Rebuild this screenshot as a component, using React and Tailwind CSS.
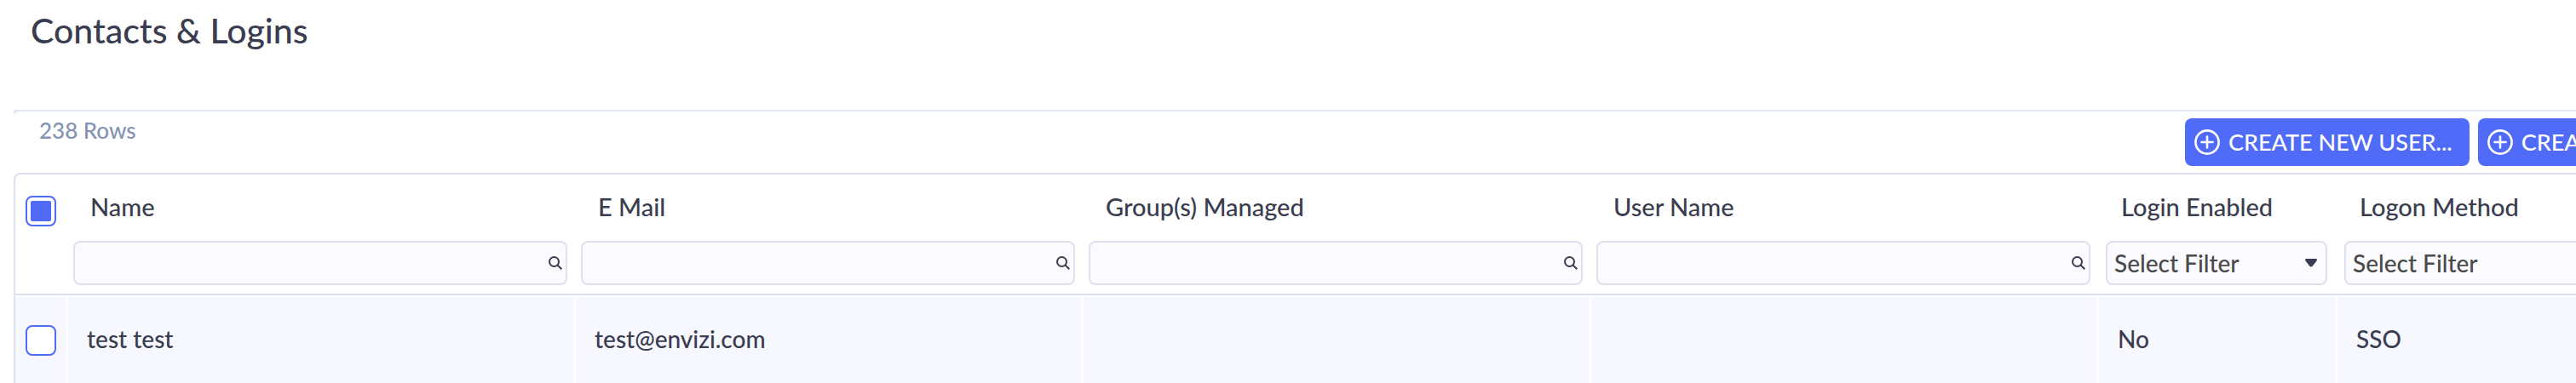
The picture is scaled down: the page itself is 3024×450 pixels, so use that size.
import { useState } from "react";

const columns = [
  { key: "name", label: "Name", filter: "text" },
  { key: "email", label: "E Mail", filter: "text" },
  { key: "groups", label: "Group(s) Managed", filter: "text" },
  { key: "userName", label: "User Name", filter: "text" },
  { key: "loginEnabled", label: "Login Enabled", filter: "select", options: ["Yes", "No"] },
  { key: "logonMethod", label: "Logon Method", filter: "select", options: ["SSO", "Password"] },
];

const rows = [
  { id: 1, name: "test test", email: "test@envizi.com", groups: "", userName: "", loginEnabled: "No", logonMethod: "SSO" },
];

const SearchIcon = () => (
  <svg viewBox="0 0 16 16" className="pointer-events-none absolute right-[6px] top-[18px] h-4 w-4" fill="none" stroke="#3a3c50" strokeWidth="2">
    <circle cx="6.5" cy="6.5" r="5.5" />
    <path d="M10.5 10.5 15.3 15.3" />
  </svg>
);

const ArrowIcon = () => (
  <svg viewBox="0 0 14 10" className="pointer-events-none absolute right-3 top-[21px] h-[10px] w-[14px]" fill="#3a3c50">
    <path d="M1.5 0h11c1.4 0 1.9 1.4 1 2.4L8.6 8.8c-.9 1-2.3 1-3.2 0L.5 2.4C-.4 1.4.1 0 1.5 0Z" />
  </svg>
);

const PlusIcon = () => (
  <svg viewBox="0 0 30 30" className="h-[30px] w-[30px] shrink-0" fill="none" stroke="white" strokeWidth="2.6">
    <circle cx="15" cy="15" r="13.6" />
    <path d="M15 8.5v13M8.5 15h13" strokeLinecap="round" />
  </svg>
);

const CheckBox = ({ label, checked, onChange }) => (
  <input
    type="checkbox"
    aria-label={label}
    checked={checked}
    onChange={onChange}
    className="block h-9 w-9 appearance-none rounded-lg border-2 border-[#506bf8] bg-white bg-clip-padding p-1 checked:bg-[#506bf8] checked:bg-clip-content"
  />
);

const ActionButton = ({ children }) => (
  <button type="button" className="flex h-14 shrink-0 items-center gap-[10px] rounded-lg bg-[#506bf8] pl-[11px] pr-5 text-[27px] font-medium whitespace-nowrap text-white">
    <PlusIcon />
    {children}
  </button>
);

const ColumnFilter = ({ column }) => {
  if (column.filter === "select") {
    return (
      <div className="relative ml-2 mr-3">
        <select
          aria-label={`${column.label} filter`}
          className="block h-[52px] w-full appearance-none rounded-lg border-2 border-[#dde1ee] bg-[#fbfbff] px-2 text-[28px] font-medium text-[#4a4a4a]"
        >
          <option>Select Filter</option>
          {column.options.map((o) => (
            <option key={o}>{o}</option>
          ))}
        </select>
        <ArrowIcon />
      </div>
    );
  }
  return (
    <div className="relative ml-[6px] mr-[10px]">
      <input
        type="text"
        aria-label={`${column.label} filter`}
        className="block h-[52px] w-full rounded-lg border-2 border-[#dde1ee] bg-[#fbfbff] pl-2 pr-8 text-[28px] font-medium"
      />
      <SearchIcon />
    </div>
  );
};

const App = () => {
  const [allSelected, setAllSelected] = useState(true);
  const [selected, setSelected] = useState([]);

  const toggleRow = (id) => {
    setSelected(selected.includes(id) ? selected.filter((s) => s !== id) : [...selected, id]);
  };

  return (
    <div className="overflow-hidden bg-white font-['Lato',sans-serif] text-[28px] font-medium text-[#3a3c50]">
      <header className="px-9 pt-3 pb-[69px]">
        <h1 className="text-[41px] leading-[48px] font-medium">Contacts &amp; Logins</h1>
      </header>

      <main className="ml-4">
        <div className="bg-[#e2e8f5] pt-[2px]">
          <div className="flex items-start justify-between rounded-tl-md bg-white pt-2 pb-4">
            <p className="pl-[30px] text-[26px] leading-7 text-[#8293b3]">238 Rows</p>
            <div className="flex w-[459px] gap-[10px] overflow-hidden">
              <ActionButton>CREATE NEW USER...</ActionButton>
              <ActionButton>CREATE</ActionButton>
            </div>
          </div>
        </div>

        {/* Contacts grid, the last column runs past the window edge */}
        <div className="-mr-10 -mt-2 rounded-tl-lg border-t-2 border-l-2 border-[#dde1ee]">
          <table className="w-full table-fixed border-separate border-spacing-0 text-left">
            <colgroup>
              <col className="w-[62px]" />
              <col span={4} />
              <col className="w-[280px]" />
              <col className="w-[320px]" />
            </colgroup>
            <thead>
              <tr>
                <th className="border-b-2 border-[#dde1ee] pt-[25px] pl-3 align-top">
                  <CheckBox label="Select all" checked={allSelected} onChange={() => setAllSelected(!allSelected)} />
                </th>
                {columns.map((column) => (
                  <th key={column.key} className="border-b-2 border-[#dde1ee] pt-[18px] pb-[10px] font-medium">
                    <div className="mb-5 pl-[26px] text-[29px] leading-10">{column.label}</div>
                    <ColumnFilter column={column} />
                  </th>
                ))}
              </tr>
            </thead>
            <tbody>
              {rows.map((row) => (
                <tr key={row.id} className="h-[103px] bg-[#f6f7ff]">
                  <td className="border-t-2 border-r-2 border-white pl-3">
                    <CheckBox label={`Select ${row.name}`} checked={selected.includes(row.id)} onChange={() => toggleRow(row.id)} />
                  </td>
                  {columns.map((column) => (
                    <td key={column.key} className="border-t-2 border-r-2 border-white pb-1 pl-[22px]">
                      {row[column.key]}
                    </td>
                  ))}
                </tr>
              ))}
            </tbody>
          </table>
        </div>
      </main>
    </div>
  );
};

export default App;
